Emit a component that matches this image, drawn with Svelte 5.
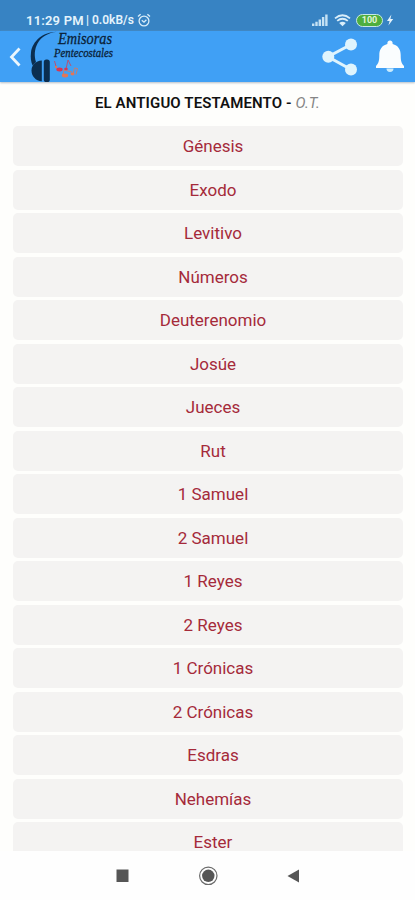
<script>
  const books = [
    "Génesis",
    "Exodo",
    "Levitivo",
    "Números",
    "Deuterenomio",
    "Josúe",
    "Jueces",
    "Rut",
    "1 Samuel",
    "2 Samuel",
    "1 Reyes",
    "2 Reyes",
    "1 Crónicas",
    "2 Crónicas",
    "Esdras",
    "Nehemías",
    "Ester",
  ];
</script>

<div class="screen">
  <div class="status">
    <span class="time">11:29 PM</span>
    <span class="speed">| 0.0kB/s</span>
    <svg class="alarm" width="14" height="15" viewBox="0 0 14 15">
      <circle cx="7" cy="8" r="4.9" />
      <path d="M1 3.6 3.6 1.3M13 3.6 10.4 1.3M4.8 7.2 7 9.2l2.4-2.4" />
    </svg>
    <span class="spacer"></span>
    <svg class="signal" width="16" height="12" viewBox="0 0 16 12">
      <path d="M0 9.5h2.400V12H0zM3.300 7.800h2.400V12h-2.400zM6.600 5.600h2.400V12h-2.400zM9.900 3h2.400v9h-2.400zM13.200.5h2.400V12h-2.400z" />
    </svg>
    <svg class="wifi" width="17" height="13" viewBox="0 0 17 13">
      <path d="M1 4.400Q8.500-1.900 16 4.400M3.200 6.900Q8.500 2.500 13.800 6.900" />
      <path d="M5.200 9Q8.500 6.400 11.800 9L8.500 12.300z" class="solid" />
    </svg>
    <span class="battery"><b>100</b></span>
    <svg class="bolt" width="8" height="12" viewBox="0 0 8 12">
      <path d="M5.400.5 1 7h2.600L2.400 11.500 7.200 5H4.400z" />
    </svg>
  </div>

  <header>
    <svg class="back" width="12" height="20" viewBox="0 0 12 20">
      <path d="M10.500 1.500 2.500 10l8 8.500" />
    </svg>
    <svg class="logo" width="88" height="51" viewBox="0 0 88 51">
      <path d="M28 .8C14 1 3.500 10 2 21.500c-.7 5 0 9.500 1.600 13l3.400-3.500C5 25 5.500 18 8.500 12.500 12.500 5.500 19 2 28 .8z" class="navy" />
      <path d="M12.800 29.500v20.800C6.500 50 2.500 45 2.500 39.500s4-9.500 10.300-10z" class="navy" />
      <rect x="14.800" y="28.500" width="6" height="22.500" rx="2.600" class="navy" />
      <text x="29" y="12.500" textLength="54" lengthAdjust="spacingAndGlyphs" class="brand">Emisoras</text>
      <text x="25" y="25.500" textLength="59" lengthAdjust="spacingAndGlyphs" class="sub">Pentecostales</text>
      <path d="m25.500 30 2 7M37 38l2-9 3 6" class="stem red" />
      <path d="m34 44 1-5 8 2M44 43l1.500-6 3 .5-1.500 6" class="stem orange" />
      <ellipse cx="30.500" cy="38.500" rx="3.200" ry="1.900" class="red-note" />
      <ellipse cx="37" cy="38" rx="1.800" ry="1.300" class="red-note" />
      <ellipse cx="36" cy="44.500" rx="3.200" ry="1.900" class="orange-note" />
      <ellipse cx="43.500" cy="43" rx="2" ry="1.400" class="orange-note" />
      <circle cx="27" cy="36" r="1.200" class="orange-note" />
    </svg>
    <span class="spacer"></span>
    <svg class="share" width="36" height="38" viewBox="0 0 36 38">
      <path d="M29 6.500 6 18.800 29 31.500" />
      <circle cx="29" cy="6.500" r="6" />
      <circle cx="6.300" cy="18.800" r="6" />
      <circle cx="29" cy="31.500" r="6" />
    </svg>
    <svg class="bell" width="28" height="33" viewBox="0 0 28 33">
      <path d="M14 .5c1.500 0 2.600 1.100 2.600 2.600v1C22 5.500 24.700 9.500 24.700 15c0 6 .8 8.500 3.300 11v2H0v-2c2.500-2.500 3.300-5 3.300-11 0-5.500 2.700-9.500 8.100-10.900v-1C11.400 1.600 12.500.5 14 .5z" />
      <path d="M10.500 28.500h7a3.500 3.500 0 0 1-7 0z" class="clapper" />
    </svg>
  </header>

  <main>
    <h1>EL ANTIGUO TESTAMENTO - <em>O.T.</em></h1>
    <ul>
      {#each books as book}
        <li>{book}</li>
      {/each}
    </ul>
  </main>

  <nav>
    <svg width="184" height="20" viewBox="0 0 184 20">
      <rect x="0.5" y="3.500" width="12" height="12.500" />
      <circle cx="92.300" cy="9.800" r="8.700" class="ring" />
      <circle cx="92.300" cy="9.800" r="6.200" />
      <path d="M183 3.500v13L171.500 9.900z" />
    </svg>
  </nav>
</div>

<style>
  :global(body) {
    margin: 0;
    background: #fefefe;
  }

  .screen {
    display: flex;
    flex-direction: column;
    width: 415px;
    height: 900px;
    overflow: hidden;
    font-family: Roboto, sans-serif;
    background: #fefefc;
  }

  .status {
    display: flex;
    align-items: center;
    box-sizing: border-box;
    flex: 0 0 31px;
    padding: 9px 21px 0 26px;
    background: #3783c3;
    color: #e4f3fc;
    white-space: nowrap;
  }

  .time {
    font-size: 13px;
    font-weight: 600;
    letter-spacing: 0.2px;
    width: 60px;
  }

  .speed {
    font-size: 12px;
    font-weight: 600;
    width: 51px;
  }

  .spacer {
    flex: 1;
  }

  .alarm {
    fill: none;
    stroke: #d9edf9;
    stroke-width: 1.3;
  }

  .signal {
    fill: #c5e2f4;
    margin-right: 6px;
  }

  .wifi {
    fill: none;
    stroke: #d9eefa;
    stroke-width: 1.8;
    margin-right: 5px;
  }

  .wifi .solid {
    fill: #d9eefa;
    stroke: none;
  }

  .battery {
    display: flex;
    align-items: center;
    justify-content: center;
    box-sizing: border-box;
    width: 27px;
    height: 13px;
    border: 1.5px solid #c7e8e6;
    border-radius: 7px;
    background: #4eae3f;
    margin-right: 3px;
  }

  .battery b {
    font-size: 9px;
    line-height: 9px;
    color: #e3f6d8;
  }

  .bolt {
    fill: #e4f3fc;
  }

  header {
    display: flex;
    align-items: center;
    box-sizing: border-box;
    flex: 0 0 51px;
    padding: 0 11px 0 9px;
    background: #40a0f5;
    box-shadow: 0 1px 2px #b5bec6;
    z-index: 1;
  }

  .back {
    fill: none;
    stroke: #eaf6fd;
    stroke-width: 2.8;
    margin-right: 8px;
  }

  .logo {
    overflow: visible;
  }

  .navy {
    fill: #0b2e50;
  }

  .brand,
  .sub {
    font-family: "Liberation Serif", serif;
    font-style: italic;
    fill: #0a1f38;
    stroke: #0a1f38;
    stroke-width: 0.3;
  }

  .brand {
    font-size: 17px;
  }

  .sub {
    font-size: 11.5px;
  }

  .stem {
    fill: none;
    stroke-width: 1;
  }

  .red {
    stroke: #b35378;
  }

  .orange {
    stroke: #c77c70;
  }

  .red-note {
    fill: #d93651;
  }

  .orange-note {
    fill: #e27658;
  }

  .share {
    fill: #dff4fd;
    margin-right: 18px;
  }

  .share path {
    fill: none;
    stroke: #dff4fd;
    stroke-width: 3;
  }

  .bell {
    fill: #fafdfe;
  }

  .clapper {
    fill: #c9ebfd;
  }

  main {
    flex: 1;
    min-height: 0;
    overflow: hidden;
  }

  h1 {
    margin: 12px 0 13px;
    font-size: 15px;
    line-height: 19px;
    font-weight: 600;
    letter-spacing: 0.12px;
    text-align: center;
    color: #111;
  }

  h1 em {
    font-weight: 400;
    color: #858585;
  }

  ul {
    display: flex;
    flex-direction: column;
    gap: 3.53px;
    margin: 0 12px 0 13px;
    padding: 0;
    list-style: none;
  }

  li {
    box-sizing: border-box;
    flex: 0 0 40px;
    height: 40px;
    padding-left: 10px;
    border-radius: 5px;
    background: #f4f3f2;
    font-size: 17px;
    line-height: 40px;
    text-align: center;
    color: #a52a3a;
  }

  nav {
    display: flex;
    align-items: center;
    justify-content: center;
    flex: 0 0 49px;
    background: #fefefe;
  }

  nav svg {
    fill: #565656;
  }

  .ring {
    fill: none;
    stroke: #6b6b6b;
    stroke-width: 1.2;
  }
</style>
